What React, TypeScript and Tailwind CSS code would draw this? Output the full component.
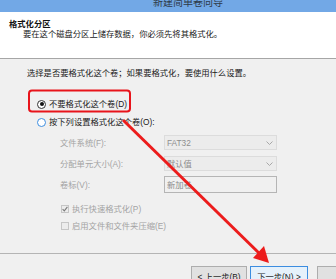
function Chevron() {
  return (
    <svg width="7" height="4" viewBox="0 0 7 4" className="mr-[3px]">
      <path d="M0.5 0.5 L3.5 3.5 L6.5 0.5" fill="none" stroke="#a8a8a8" strokeWidth="1" />
    </svg>
  );
}

function Radio({ checked, label }: { checked?: boolean; label: string }) {
  return (
    <div className="flex items-center h-[14px] pl-[37px]">
      <span
        className={
          checked
            ? "w-[9px] h-[9px] rounded-full border border-[#333] bg-white flex items-center justify-center"
            : "w-[9px] h-[9px] rounded-full border border-[#3d8ee0] bg-white"
        }
      >
        {checked && <span className="w-[4px] h-[4px] rounded-full bg-[#111]" />}
      </span>
      <span className="ml-[3px] text-[#1a1a1a]">{label}</span>
    </div>
  );
}

function FormRow({ label, value, input }: { label: string; value: string; input?: boolean }) {
  return (
    <div className="flex items-center h-[21px] pl-[60px]">
      <span className="w-[104px] text-[#a3a3a3]">{label}</span>
      {input ? (
        <div className="w-[113px] h-[17px] border border-[#b5b5b5] bg-[#f0f0f0] flex items-center pl-[2px] text-[#8c8c8c]">
          {value}
        </div>
      ) : (
        <div className="w-[113px] h-[15px] border border-[#dcdcdc] bg-[#ececec] flex items-center justify-between pl-[2px] text-[#8c8c8c]">
          <span>{value}</span>
          <Chevron />
        </div>
      )}
    </div>
  );
}

function Check({ checked, label }: { checked?: boolean; label: string }) {
  return (
    <div className="flex items-center h-[12px] pl-[61px]">
      <span className="w-[8px] h-[8px] border border-[#c6c6c6] bg-[#ececec] flex items-center justify-center">
        {checked && (
          <svg width="6" height="6" viewBox="0 0 6 6">
            <path d="M0.6 3.2 L2.3 4.9 L5.4 0.9" fill="none" stroke="#7a7a7a" strokeWidth="1.1" />
          </svg>
        )}
      </span>
      <span className="ml-[3px] text-[#a3a3a3]">{label}</span>
    </div>
  );
}

export default function App() {
  return (
    <div className="relative w-[336px] h-[279px] overflow-hidden bg-[#f0f0f0] text-[8.3px] leading-[10px] whitespace-nowrap font-['Liberation_Sans','Noto_Sans_CJK_SC',sans-serif]">
      {/* title bar */}
      <div className="h-[12px] bg-[#72a8e6] overflow-hidden">
        <div className="pl-[153px] -mt-[2px] text-[10px] leading-[10px] text-[#2e3a48]">新建简单卷向导</div>
      </div>

      {/* header */}
      <div className="h-[47px] bg-white border-b border-[#a6a6a6] pt-[7px]">
        <div className="pl-[9px] font-bold text-[#111]">格式化分区</div>
        <div className="pl-[23px] text-[#1a1a1a]">要在这个磁盘分区上储存数据，你必须先将其格式化。</div>
      </div>

      {/* body */}
      <div className="h-[194px] flex flex-col">
        <div className="mt-[9px] pl-[27px] text-[#1a1a1a]">选择是否要格式化这个卷；如果要格式化，要使用什么设置。</div>
        <div className="mt-[19px]">
          <Radio checked label="不要格式化这个卷(D)" />
        </div>
        <div className="mt-[4px]">
          <Radio label="按下列设置格式化这个卷(O):" />
        </div>
        <div className="mt-[3px]">
          <FormRow label="文件系统(F):" value="FAT32" />
          <FormRow label="分配单元大小(A):" value="默认值" />
          <FormRow label="卷标(V):" value="新加卷" input />
        </div>
        <div className="mt-[8px] flex flex-col gap-[5px]">
          <Check checked label="执行快速格式化(P)" />
          <Check label="启用文件和文件夹压缩(E)" />
        </div>
      </div>

      {/* footer */}
      <div className="border-t border-[#b4b4b4] h-px bg-white" />
      <div className="flex pt-[12px] pl-[191px] gap-[3px]">
        <div className="w-[56px] h-[21px] shrink-0 border border-[#adadad] bg-[#e1e1e1] flex items-center justify-center text-[#1a1a1a]">
          &lt; 上一步(B)
        </div>
        <div className="w-[58px] h-[21px] shrink-0 border border-[#3c8de0] bg-[#e5f1fb] flex items-center justify-center text-[#1a1a1a]">
          下一步(N) &gt;
        </div>
        <div className="ml-[6px] w-[58px] h-[21px] shrink-0 border border-[#adadad] bg-[#e1e1e1]" />
      </div>

      {/* annotation */}
      <svg className="absolute inset-0 pointer-events-none" width="336" height="279" viewBox="0 0 336 279">
        <rect x="29" y="90.5" width="101" height="21" rx="3" fill="none" stroke="#e8141b" strokeWidth="2" />
        <line x1="123" y1="120" x2="262" y2="256" stroke="#ec1c1c" strokeWidth="3" />
        <polygon points="269,263 253,258 264,246" fill="#ec1c1c" />
      </svg>
    </div>
  );
}
